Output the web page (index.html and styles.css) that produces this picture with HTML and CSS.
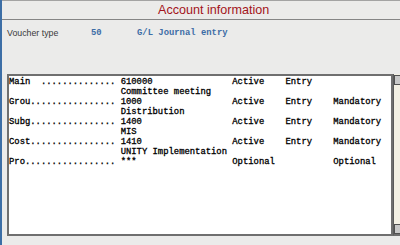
FILE: index.html
```html
<!DOCTYPE html>
<html>
<head>
<meta charset="utf-8">
<link rel="stylesheet" href="styles.css">
</head>
<body>
<div class="page">
  <div class="header"><span class="title">Account information</span></div>
  <div class="voucher">
    <span class="v-label">Voucher type</span>
    <span class="v-code">50</span>
    <span class="v-name">G/L Journal entry</span>
  </div>
  <div class="list-area">
    <div class="list">
<div class="line">Main  .............. 610000               Active    Entry</div>
<div class="line">                     Committee meeting</div>
<div class="line">Grou................ 1000                 Active    Entry    Mandatory</div>
<div class="line">                     Distribution</div>
<div class="line">Subg................ 1400                 Active    Entry    Mandatory</div>
<div class="line">                     MIS</div>
<div class="line">Cost................ 1410                 Active    Entry    Mandatory</div>
<div class="line">                     UNITY Implementation</div>
<div class="line">Pro................. ***                  Optional           Optional</div>
    </div>
    <div class="scrollbar">
      <div class="sb-btn"></div>
      <div class="sb-track"></div>
      <div class="sb-btn"></div>
    </div>
  </div>
</div>
</body>
</html>
```
FILE: styles.css
```css
html, body {
  margin: 0;
  padding: 0;
}
body {
  width: 400px;
  height: 245px;
  overflow: hidden;
  background: #ebebea;
}
.page {
  height: 245px;
  border-left: 2px solid #3c6ea6;
  box-sizing: border-box;
  display: flex;
  flex-direction: column;
}
.header {
  height: 18px;
  border-top: 1px solid #a3a3a3;
  border-bottom: 1px solid #858585;
  display: flex;
  align-items: center;
  padding-left: 156px;
}
.title {
  font-family: "Liberation Sans", Arial, sans-serif;
  font-size: 12.6px;
  color: #a3141a;
}
.voucher {
  height: 12px;
  margin-top: 7px;
  display: flex;
  align-items: center;
  padding-left: 5px;
}
.v-label {
  font-family: "Liberation Sans", Arial, sans-serif;
  font-size: 8.8px;
  color: #3a3a3a;
  width: 84px;
}
.v-code, .v-name {
  font-family: "Liberation Mono", monospace;
  font-weight: bold;
  font-size: 8.9px;
  color: #3d6da6;
}
.v-code {
  width: 46px;
}
.list-area {
  margin-top: 35px;
  margin-left: 5px;
  display: flex;
  height: 162px;
}
.list {
  width: 382px;
  background: #ffffff;
  border: 2px solid #6f6f6f;
  font-family: "Liberation Mono", monospace;
  font-size: 8.87px;
  color: #000000;
  -webkit-text-stroke: 0.3px #000000;
}
.line {
  height: 10px;
  line-height: 10px;
  white-space: pre;
  padding-top: 1px;
  box-sizing: border-box;
}
.scrollbar {
  flex: 1;
  display: flex;
  flex-direction: column;
  background: #f3f0e4;
  border-left: 1px solid #5a5a5a;
  border-bottom: 2px solid #6f6f6f;
  padding-top: 1px;
}
.sb-btn {
  height: 8px;
  background: #c8c8c8;
  border: 1px solid #505050;
  border-right: none;
}
.sb-track {
  flex: 1;
}
```
